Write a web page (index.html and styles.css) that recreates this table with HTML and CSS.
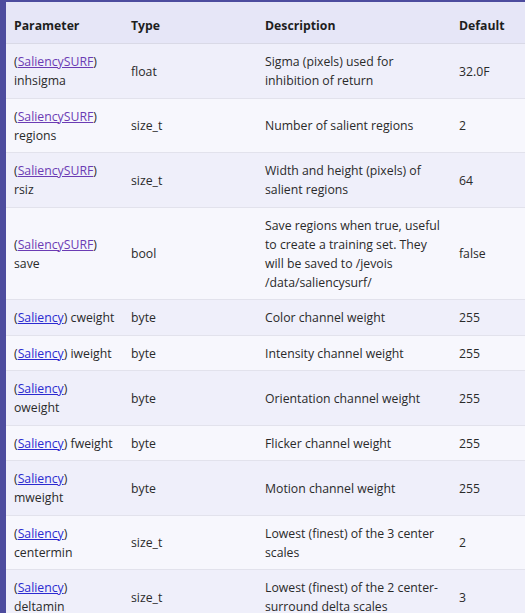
FILE: index.html
```html
<!DOCTYPE html>
<html lang="en">
<head>
<meta charset="utf-8">
<title>Parameters</title>
<link rel="stylesheet" href="styles.css">
</head>
<body>
<div class="frame">
  <table class="params">
    <colgroup>
      <col class="c1"><col class="c2"><col class="c3"><col class="c4">
    </colgroup>
    <thead>
      <tr><th>Parameter</th><th>Type</th><th>Description</th><th>Default</th></tr>
    </thead>
    <tbody>
      <tr><td>(<a class="visited" href="#">SaliencySURF</a>) inhsigma</td><td>float</td><td>Sigma (pixels) used for inhibition of return</td><td>32.0F</td></tr>
      <tr><td>(<a class="visited" href="#">SaliencySURF</a>) regions</td><td>size_t</td><td>Number of salient regions</td><td>2</td></tr>
      <tr><td>(<a class="visited" href="#">SaliencySURF</a>) rsiz</td><td>size_t</td><td>Width and height (pixels) of salient regions</td><td>64</td></tr>
      <tr><td>(<a class="visited" href="#">SaliencySURF</a>) save</td><td>bool</td><td>Save regions when true, useful to create a training set. They will be saved to /jevois<wbr>/data/saliencysurf/</td><td>false</td></tr>
      <tr><td>(<a href="#">Saliency</a>) cweight</td><td>byte</td><td>Color channel weight</td><td>255</td></tr>
      <tr><td>(<a href="#">Saliency</a>) iweight</td><td>byte</td><td>Intensity channel weight</td><td>255</td></tr>
      <tr><td>(<a href="#">Saliency</a>) oweight</td><td>byte</td><td>Orientation channel weight</td><td>255</td></tr>
      <tr><td>(<a href="#">Saliency</a>) fweight</td><td>byte</td><td>Flicker channel weight</td><td>255</td></tr>
      <tr><td>(<a href="#">Saliency</a>) mweight</td><td>byte</td><td>Motion channel weight</td><td>255</td></tr>
      <tr><td>(<a href="#">Saliency</a>) centermin</td><td>size_t</td><td>Lowest (finest) of the 3 center scales</td><td>2</td></tr>
      <tr><td>(<a href="#">Saliency</a>) deltamin</td><td>size_t</td><td>Lowest (finest) of the 2 center-surround delta scales</td><td>3</td></tr>
    </tbody>
  </table>
</div>
</body>
</html>
```
FILE: styles.css
```css
html, body {
  margin: 0;
  padding: 0;
  background: #f7f7fd;
  overflow: hidden;
}
.frame {
  border-top: 2px solid #4d4c9e;
  border-left: 6px solid #4d4c9e;
  min-height: 700px;
  background: #f7f7fd;
}
.params {
  border-collapse: collapse;
  table-layout: fixed;
  width: 519px;
  font-family: "Open Sans", "Liberation Sans", sans-serif;
  font-size: 12.25px;
  line-height: 19px;
  color: #2a2a2a;
}
.c1 { width: 117px; }
.c2 { width: 134px; }
.c3 { width: 194px; }
.c4 { width: 74px; }
.params th {
  background: #e6e6f7;
  text-align: left;
  font-weight: 700;
  color: #1e1e1e;
  padding: 14px 8px 8px 8px;
  border-bottom: 1px solid #d9d9e6;
}
.params td {
  padding: 8px 8px 7.5px 8px;
  vertical-align: middle;
  border-bottom: 1px solid #e2e2ec;
}
.params tbody tr:nth-child(odd) td { background: #efeffa; }
.params tbody tr:nth-child(even) td { background: #f7f7fd; }
.params a {
  color: #2b2bd0;
  text-decoration: underline;
}
.params a.visited {
  color: #6b3cb4;
}
```
